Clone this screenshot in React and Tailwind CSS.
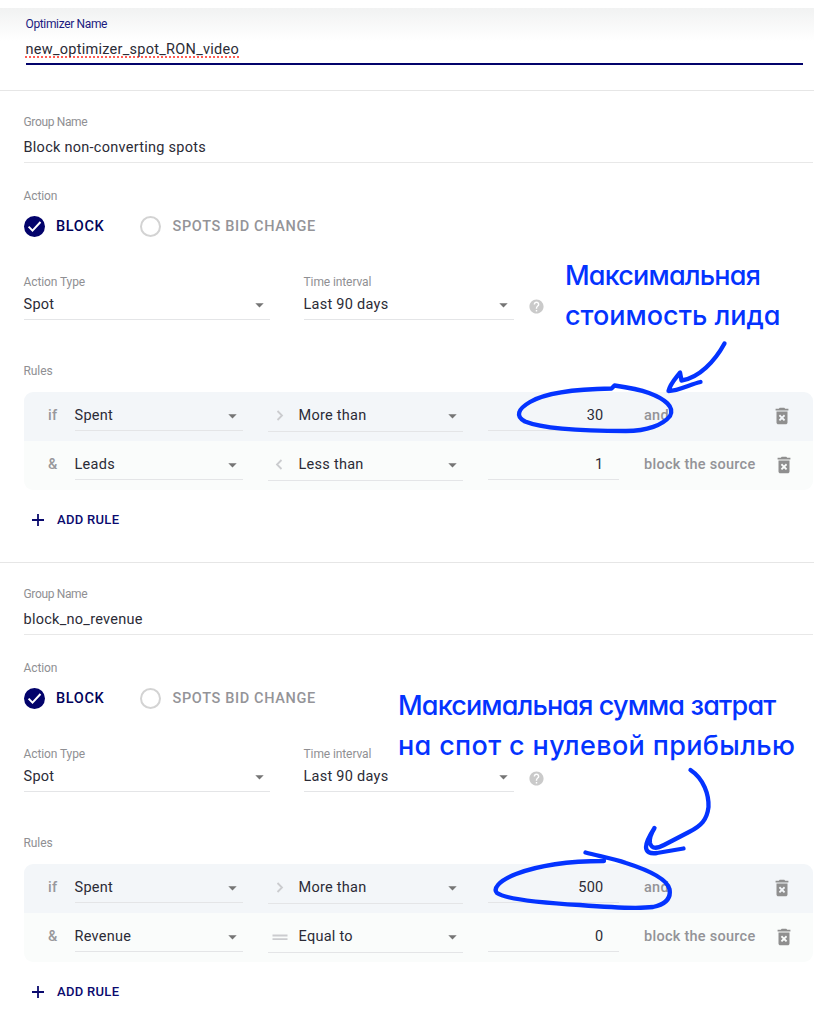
import React, { useState } from 'react'
import { MdArrowDropDown, MdDeleteForever, MdHelp } from 'react-icons/md'

const initialGroups = [
  {
    id: 1,
    name: 'Block non-converting spots',
    rules: [
      { prefix: 'if', field: 'Spent', sign: 'more', condition: 'More than', value: '30', suffix: 'and' },
      { prefix: '&', field: 'Leads', sign: 'less', condition: 'Less than', value: '1', suffix: 'block the source' },
    ],
  },
  {
    id: 2,
    name: 'block_no_revenue',
    rules: [
      { prefix: 'if', field: 'Spent', sign: 'more', condition: 'More than', value: '500', suffix: 'and' },
      { prefix: '&', field: 'Revenue', sign: 'equal', condition: 'Equal to', value: '0', suffix: 'block the source' },
    ],
  },
]

const signPaths = {
  more: 'M5.5 3 10 7.5l-4.5 4.5',
  less: 'M9.5 3 5 7.5l4.5 4.5',
  equal: 'M.5 6.5h15M.5 10.2h15',
}

function Label({ children, className = 'tracking-[-0.1px]' }) {
  return <div className={`h-4 text-[12px] leading-4 text-[#8f8f93] ${className}`}>{children}</div>
}

function Select({ value, className = '', children }) {
  return (
    <div className={`flex items-start border-b border-[#e4e5e7] ${className}`}>
      {children}
      <span className="grow leading-[22px]">{value}</span>
      <MdArrowDropDown className="mt-px h-5 w-[21px] shrink-0 text-[#757575]" />
    </div>
  )
}

function ActionRadio({ action, onChange }) {
  return (
    <div className="mt-3 flex h-[21px] items-center text-[14.5px] font-medium leading-5">
      <button onClick={() => onChange('block')} className="flex items-center gap-[11.5px] text-[#02025a]">
        <svg className="size-[21px]" viewBox="0 0 21 21" fill="none">
          <circle cx="10.5" cy="10.5" r="10.5" fill="#03036b" />
          {action === 'block' && <path d="m4.6 10.6 3.9 4 8-8.6" stroke="#fff" strokeWidth="2" />}
        </svg>
        <span className="w-[49px] text-left tracking-[0.65px]">BLOCK</span>
      </button>
      <button onClick={() => onChange('bid')} className="ml-[35px] flex items-center gap-[11.5px] text-[#949498]">
        <span className="size-[21px] rounded-full border-2 border-[#d3d3d3] bg-white" />
        <span className="tracking-[0.65px]">SPOTS BID CHANGE</span>
      </button>
    </div>
  )
}

function RuleRow({ rule, first }) {
  return (
    <div className={`flex h-[49px] items-start pl-[24.5px] pt-[13px] ${first ? 'bg-[#f3f6f9]' : 'bg-[#fafcfb]'}`}>
      <span className="w-[26.5px] font-medium leading-[22px] text-[#98989c]">{rule.prefix}</span>
      <Select value={rule.field} className="h-[26px] w-[168.5px]" />
      <Select value={rule.condition} className="ml-[25px] h-[27px] w-[194.5px]">
        <svg className="ml-[3.5px] mr-[11px] mt-[3px] size-4 shrink-0" viewBox="0 0 16 16" fill="none" stroke="#cbcccf" strokeWidth="1.8">
          <path d={signPaths[rule.sign]} />
        </svg>
      </Select>
      <div className="ml-[25.5px] h-[26px] w-[131px] border-b border-[#e4e5e7] pr-[15.5px] text-right leading-[22px]">{rule.value}</div>
      <span className="ml-[25px] grow font-medium leading-[22px] text-[#939397]">{rule.suffix}</span>
      <MdDeleteForever className={`size-[22px] shrink-0 text-[#8f8f8f] ${first ? 'mr-5' : 'mr-[18px]'}`} />
    </div>
  )
}

function Group({ group }) {
  const [action, setAction] = useState('block')

  return (
    <section className="h-[472px] border-t border-[#e6e6e6] pl-[23.5px] pr-px pt-[23px]">
      <Label className="tracking-[-0.35px]">Group Name</Label>
      <div className="mt-[7px] h-[26px] border-b border-[#e8e8e8] leading-[21px]">{group.name}</div>

      <Label className="mt-[25px] tracking-[-0.1px]">Action</Label>
      <ActionRadio action={action} onChange={setAction} />

      <div className="mt-[37px] flex">
        <div className="w-[246px]">
          <Label>Action Type</Label>
          <Select value="Spot" className="mt-1 h-[26px]" />
        </div>
        <div className="ml-[34px] w-[210.5px]">
          <Label>Time interval</Label>
          <Select value="Last 90 days" className="mt-1 h-[26px]" />
        </div>
        <MdHelp className="ml-[13.5px] mt-6 size-[17px] text-[#cacaca]" />
      </div>

      <Label className="mt-[43px] tracking-[-0.1px]">Rules</Label>
      <div className="mt-[13px] overflow-hidden rounded-[9px]">
        {group.rules.map((rule, index) => (
          <RuleRow key={rule.prefix} rule={rule} first={index === 0} />
        ))}
      </div>

      <button className="ml-2 mt-5 flex h-5 items-center gap-[13.5px] text-[13px] font-medium leading-5 tracking-[0.3px] text-[#0a0a6e]">
        <svg className="size-3" viewBox="0 0 12 12" stroke="currentColor" strokeWidth="1.8">
          <path d="M6 0v12M0 6h12" />
        </svg>
        ADD RULE
      </button>
    </section>
  )
}

// Hand-drawn notes on top of the form
function Notes() {
  return (
    <div className="pointer-events-none absolute inset-0 font-[Inter,sans-serif] text-[27px] font-medium leading-[39.5px] text-[#0433ff] [font-feature-settings:'cv11']">
      <div className="absolute left-[565px] top-[256px] whitespace-nowrap">
        <div className="tracking-[-0.8px]">Максимальная</div>
        <div className="tracking-[0px]">стоимость лида</div>
      </div>
      <div className="absolute left-[398px] top-[686px] whitespace-nowrap">
        <div className="tracking-[-0.85px]">Максимальная сумма затрат</div>
        <div className="tracking-[0.35px]">на спот с нулевой прибылью</div>
      </div>
      <svg className="absolute inset-0 size-full" viewBox="0 0 814 1024" fill="none" stroke="#0433ff" strokeWidth="4.3" strokeLinecap="round" strokeLinejoin="round">
        <path d="M724.5 343.5C715 361 699 378 681.5 380.5L680 372.5C675 379 670 384 668.5 391C678 391 691 384 700.5 382" />
        <path d="M611.5 388.5C578 389 547 392 530 402C518 409 515 416 525 421.5C546 430 597 431 626 431C647 431 663 425 670 416C675 407 665 399 649 393C638 389 625 387 614.5 385.5L611.5 388.5" />
        <path d="M690.5 770C704 779 709 795 708.5 807C707 820 701 826 689 832L664 845C658 848 652 850 650 843C649 838 652 832 654.5 828C650 835 646 842 646 847C646 852 650 854 657 853L683.5 848.5" />
        <path d="M604 861C567 861 537 866 516 874C498 881 493 889 497 893C507 900 546 903 580 905C605 907 637 909 653 907C667 904 671 897 669.5 889C667 879 648 870 626 863C612 858 598 856 585.5 852.5" />
      </svg>
    </div>
  )
}

export default function App() {
  const [optimizerName] = useState('new_optimizer_spot_RON_video')

  return (
    <main className="relative h-[1024px] w-[814px] overflow-hidden bg-white font-[Roboto,sans-serif] text-[14.5px] tracking-[0.27px] text-[#2b2b36]">
      <header className="mt-2 h-[82px] bg-linear-to-b from-[#f1f2f2] to-white to-40% pl-[25.5px] pr-[11px] pt-2">
        <div className="h-4 text-[12px] leading-4 tracking-[-0.35px] text-[#1b1b80]">Optimizer Name</div>
        <div className="mt-[7px] h-[26px] border-b-2 border-[#03036b] leading-[22px]">
          <span className="underline decoration-[#ff5b52] decoration-dotted decoration-2 underline-offset-2 [text-decoration-skip-ink:none]">
            {optimizerName}
          </span>
        </div>
      </header>

      {initialGroups.map(group => (
        <Group key={group.id} group={group} />
      ))}

      <Notes />
    </main>
  )
}
